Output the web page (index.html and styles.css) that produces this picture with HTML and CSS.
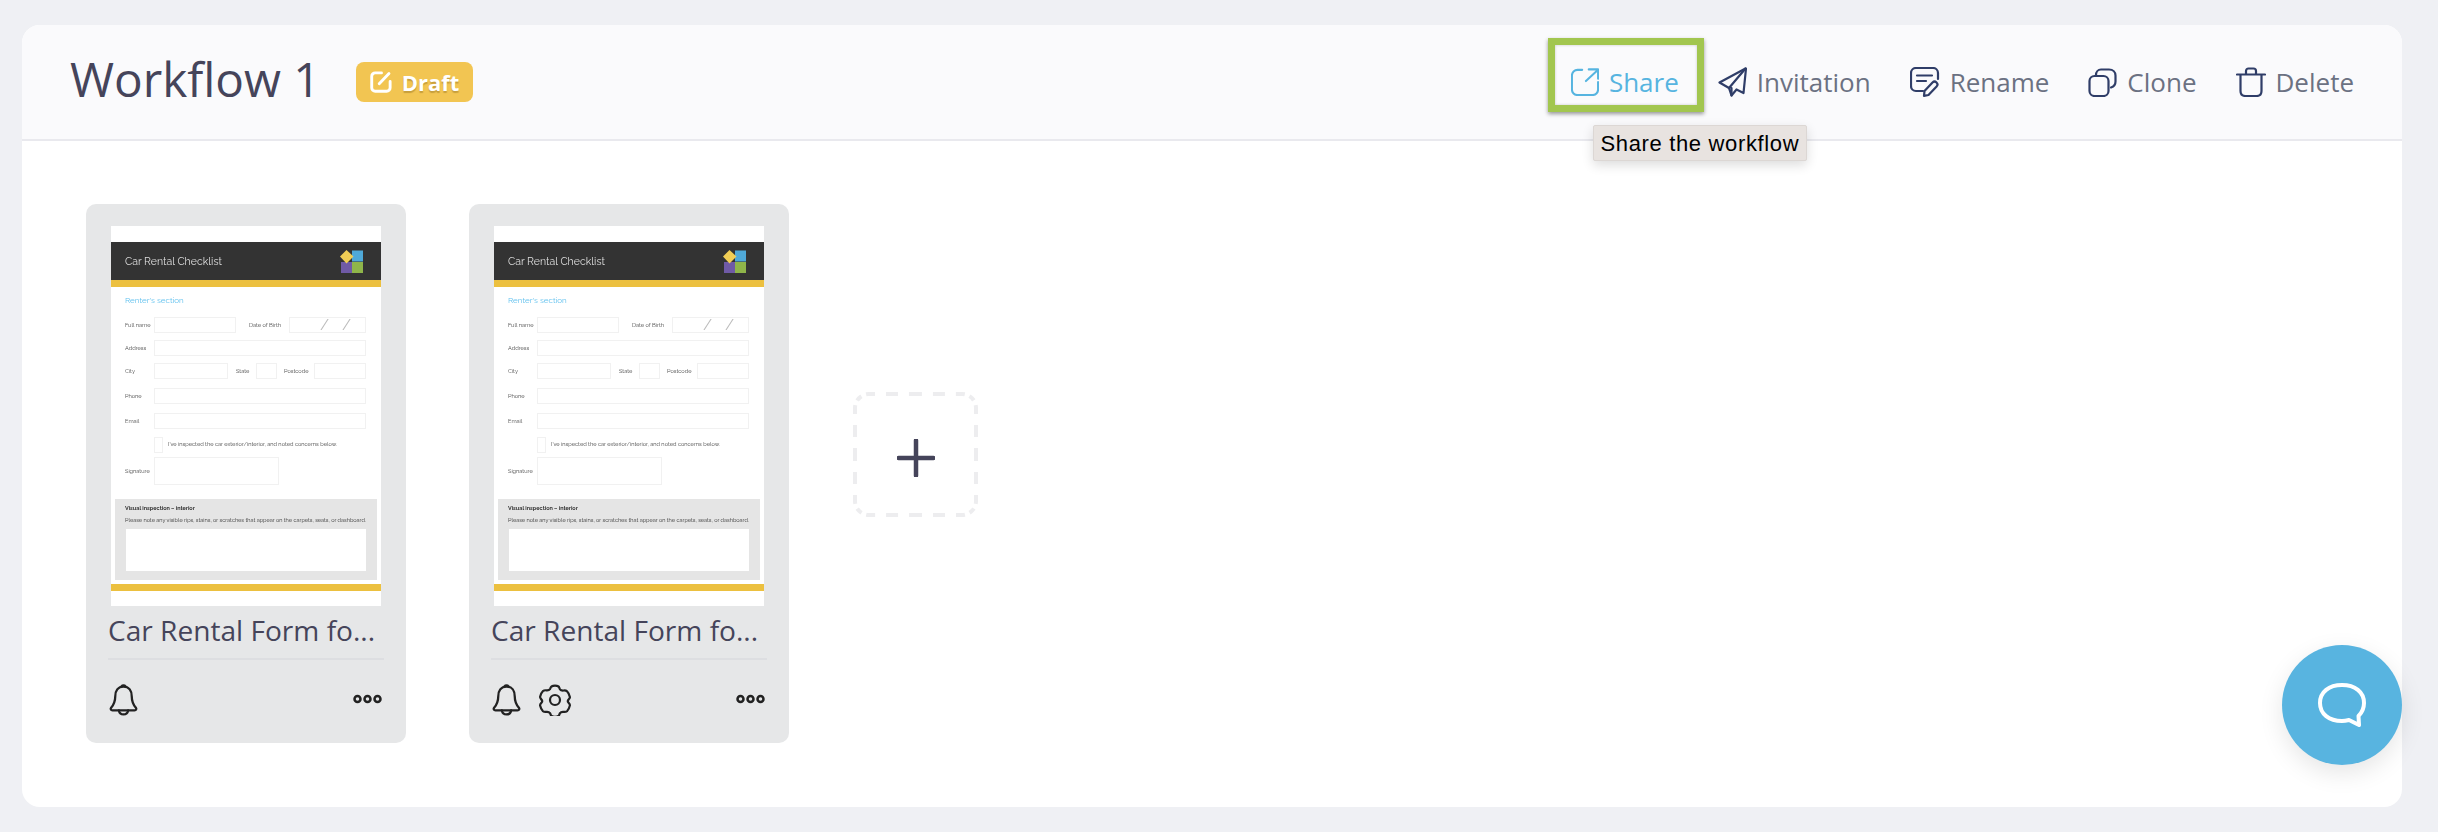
FILE: index.html
```html
<!DOCTYPE html>
<html lang="en">
<head>
<meta charset="utf-8">
<title>Workflow 1</title>
<link rel="stylesheet" href="styles.css">
</head>
<body>
<svg class="defs" aria-hidden="true">
  <symbol id="bell" viewBox="0 0 28 31"><path d="M14 2.500C8.500 2.500 6 7 6 12c0 5-1.500 8-4 11-.9 1.200-.2 2.500 1.300 2.500h21.400c1.500 0 2.200-1.300 1.300-2.500-2.500-3-4-6-4-11 0-5-2.500-9.500-8-9.500Z"/><path d="M9.500 25.500c.4 2.700 2.200 4 4.500 4s4.100-1.300 4.500-4"/><path d="M12 2.300c1-1.300 3-1.300 4 0"/></symbol>
  <symbol id="gear" viewBox="0 0 32 32"><path d="M12.500 2.500c1.800-1.300 5.200-1.300 7 0 .8.600.9 1.900 1.500 2.800.7 1 2.300 1.300 3.600 1.200 1.300-.1 2.500-.1 3.400.7 1.400 1.400 2.500 3.900 2.900 5.800.2 1-.8 2-1.500 2.800-.8 1-.8 1.900 0 2.800.7.800 1.700 1.800 1.500 2.800-.4 1.900-1.500 4.400-2.900 5.800-.9.800-2.100.8-3.400.7-1.300-.1-2.900.2-3.600 1.200-.6.900-.7 2.200-1.500 2.800-1.800 1.300-5.200 1.300-7 0-.8-.6-.9-1.900-1.500-2.800-.7-1-2.300-1.300-3.600-1.200-1.300.1-2.500.1-3.400-.7-1.400-1.400-2.500-3.900-2.900-5.800-.2-1 .8-2 1.500-2.800.8-.9.800-1.800 0-2.800C1.900 14.700.9 13.700 1.100 12.800c.4-1.900 1.500-4.400 2.900-5.800.9-.8 2.100-.8 3.400-.7 1.300.1 2.900-.2 3.600-1.200.6-.9.700-2.200 1.500-2.600Z"/><circle cx="16" cy="16" r="5"/></symbol>
  <symbol id="dots" viewBox="0 0 29 10"><circle cx="4.500" cy="5" r="3"/><circle cx="14.500" cy="5" r="3"/><circle cx="24.500" cy="5" r="3"/></symbol>
  <symbol id="logo" viewBox="0 0 23 23"><rect x="12" y="0.500" width="11" height="11" fill="#4fa9d8"/><rect x="12" y="12" width="11" height="11" fill="#8fb54a"/><rect x="1" y="12" width="11" height="11" fill="#6f5aa6"/><path d="M6.500 0 13.500 6.500 6.500 13.500 0 6.500Z" fill="#f0cd55"/></symbol>
</svg>

<main class="panel">
  <header class="topbar">
    <div class="heading">
      <h1 class="title">Workflow 1</h1>
      <span class="badge">
        <svg class="badge-icon" viewBox="0 0 20 20"><path d="M10 2.500H4.500a3 3 0 0 0-3 3v10a3 3 0 0 0 3 3h10a3 3 0 0 0 3-3V10"/><path d="m8 12 8.500-9"/></svg>
        Draft
      </span>
    </div>
    <nav class="actions">
      <a class="action share">
        <svg class="icon" width="28" height="28" viewBox="0 0 30 30"><path d="M12 2H7a6 6 0 0 0-6 6v15a6 6 0 0 0 6 6h16a6 6 0 0 0 6-6v-8"/><path d="M16 14 29 2M19 1.500h10v10"/></svg>
        <span>Share</span>
        <span class="tooltip">Share the workflow</span>
      </a>
      <a class="action">
        <svg class="icon" width="29" height="30" viewBox="0 0 29 30"><path d="M27.500 1.500 1.500 15.500l9.500 5.500 2.500 7.500 5-6 7 3.500 2.500-24.500Z"/><path d="M27.500 1.500 11 21M13.500 28.500l0-7.500"/></svg>
        <span>Invitation</span>
      </a>
      <a class="action">
        <svg class="icon" width="30" height="30" viewBox="0 0 30 30"><path d="M13 24H6a5 5 0 0 1-5-5V6a5 5 0 0 1 5-5h17a5 5 0 0 1 5 5v6"/><path d="M7 8.500h15M7 14h9"/><path d="m14.500 24 8-8.500c1.200-1.200 2.800-1.200 4 0s1.300 2.800.1 4l-8.100 8.500-4.500.8.500-4.800Z"/></svg>
        <span>Rename</span>
      </a>
      <a class="action">
        <svg class="icon" width="29" height="29" viewBox="0 0 29 29"><rect x="1.500" y="8" width="19" height="20" rx="5"/><path d="M8 8V7c0-3 2-5.500 5-5.500h8c4 0 6.500 2.500 6.500 6v6c0 3-1.500 5-4.500 6"/></svg>
        <span>Clone</span>
      </a>
      <a class="action">
        <svg class="icon" width="30" height="30" viewBox="0 0 30 30"><path d="M1 7.500h28"/><path d="M10 7V4c0-1.500 1-2.500 2.500-2.500h5C19 1.500 20 2.500 20 4v3"/><path d="M4.500 8v16c0 3 2 5 5 5h11c3 0 5-2 5-5V8"/></svg>
        <span>Delete</span>
      </a>
    </nav>
  </header>

  <section class="board">
    <article class="card">
      <div class="thumb">
        <div class="thumb-head"><span>Car Rental Checklist</span><svg class="thumb-logo"><use href="#logo"/></svg></div>
        <div class="thumb-rule"></div>
        <p class="thumb-section">Renter's section</p>
        <div class="frow r1"><span class="lab">Full name</span><i class="fld w82"></i><span class="lab mid">Date of Birth</span><i class="fld grow date"><b>/</b><b>/</b></i></div>
        <div class="frow r2"><span class="lab">Address</span><i class="fld grow"></i></div>
        <div class="frow r3"><span class="lab">City</span><i class="fld w74"></i><span class="lab st">State</span><i class="fld w21"></i><span class="lab pc">Postcode</span><i class="fld grow"></i></div>
        <div class="frow r4"><span class="lab">Phone</span><i class="fld grow"></i></div>
        <div class="frow r5"><span class="lab">Email</span><i class="fld grow"></i></div>
        <div class="frow r6"><span class="lab"></span><i class="fld w9"></i><span class="lab chk">I've inspected the car exterior/interior, and noted concerns below.</span></div>
        <div class="frow r7"><span class="lab">Signature</span><i class="fld w125"></i></div>
        <div class="inspect">
          <strong>Visual inspection – interior</strong>
          <span>Please note any visible rips, stains, or scratches that appear on the carpets, seats, or dashboard.</span>
          <i></i>
        </div>
        <div class="thumb-foot"></div>
      </div>
      <h2 class="card-title">Car Rental Form fo...</h2>
      <div class="card-tools">
        <svg class="tool bell"><use href="#bell"/></svg>
        <svg class="tool dots"><use href="#dots"/></svg>
      </div>
    </article>

    <article class="card">
      <div class="thumb">
        <div class="thumb-head"><span>Car Rental Checklist</span><svg class="thumb-logo"><use href="#logo"/></svg></div>
        <div class="thumb-rule"></div>
        <p class="thumb-section">Renter's section</p>
        <div class="frow r1"><span class="lab">Full name</span><i class="fld w82"></i><span class="lab mid">Date of Birth</span><i class="fld grow date"><b>/</b><b>/</b></i></div>
        <div class="frow r2"><span class="lab">Address</span><i class="fld grow"></i></div>
        <div class="frow r3"><span class="lab">City</span><i class="fld w74"></i><span class="lab st">State</span><i class="fld w21"></i><span class="lab pc">Postcode</span><i class="fld grow"></i></div>
        <div class="frow r4"><span class="lab">Phone</span><i class="fld grow"></i></div>
        <div class="frow r5"><span class="lab">Email</span><i class="fld grow"></i></div>
        <div class="frow r6"><span class="lab"></span><i class="fld w9"></i><span class="lab chk">I've inspected the car exterior/interior, and noted concerns below.</span></div>
        <div class="frow r7"><span class="lab">Signature</span><i class="fld w125"></i></div>
        <div class="inspect">
          <strong>Visual inspection – interior</strong>
          <span>Please note any visible rips, stains, or scratches that appear on the carpets, seats, or dashboard.</span>
          <i></i>
        </div>
        <div class="thumb-foot"></div>
      </div>
      <h2 class="card-title">Car Rental Form fo...</h2>
      <div class="card-tools">
        <svg class="tool bell"><use href="#bell"/></svg>
        <svg class="tool gear"><use href="#gear"/></svg>
        <svg class="tool dots"><use href="#dots"/></svg>
      </div>
    </article>

    <button class="add" aria-label="Add">
      <svg class="add-frame" viewBox="0 0 125 125"><rect x="2" y="2" width="121" height="121" rx="14" pathLength="460" stroke-dasharray="9 11 12 11 13 11 12 11 9 5 6 5" stroke-dashoffset="3"/></svg>
      <svg class="add-plus" viewBox="0 0 38 38"><path d="M19 1.500v35M1.500 19h35"/></svg>
    </button>
  </section>

  <button class="chat" aria-label="Chat">
    <svg viewBox="0 0 48 44"><path d="M24 2C11 2 2 9 2 20s9 18 22 18c3 0 5-.5 7-1l10 5-.5-9c3-3 5.500-8 5.500-13C46 9 37 2 24 2Z"/></svg>
  </button>
</main>
</body>
</html>
```
FILE: styles.css
```css
* { box-sizing: border-box; }
html, body { margin: 0; height: 832px; overflow: hidden; }
body {
  background: #eff0f4;
  padding: 25px 36px 25px 22px;
  font-family: "Open Sans", "Noto Sans", sans-serif;
}
.defs { position: absolute; width: 0; height: 0; }

.panel {
  position: relative;
  height: 782px;
  background: #fff;
  border-radius: 18px;
  display: flex;
  flex-direction: column;
}

.topbar {
  height: 116px;
  flex: none;
  background: #fafafc;
  border-bottom: 2px solid #e9e9ee;
  border-radius: 18px 18px 0 0;
  display: flex;
  align-items: center;
  justify-content: space-between;
  padding: 0 48px 5px 48px;
}
.heading { display: flex; align-items: center; gap: 35px; }
.title {
  margin: -2px 0 0;
  font-size: 47.700px;
  font-weight: 400;
  line-height: 1;
  color: #45445a;
}
.badge {
  display: flex;
  align-items: center;
  gap: 9px;
  height: 40px;
  padding: 0 14px;
  margin-top: 5px;
  background: #f2c552;
  border-radius: 8px;
  color: #fff;
  font-size: 22px;
  font-weight: 700;
  text-shadow: 0 2px 1px rgba(120, 90, 20, .35);
}
.badge-icon {
  width: 23px;
  height: 23px;
  fill: none;
  stroke: #fff;
  stroke-width: 2.500;
  stroke-linecap: round;
}

.actions { display: flex; align-items: center; gap: 39px; margin-top: 5px; }
.action {
  position: relative;
  display: flex;
  align-items: center;
  gap: 10px;
  font-size: 26px;
  line-height: 32px;
  color: #6b7182;
}
.icon {
  flex: none;
  fill: none;
  stroke: #2f3d68;
  stroke-width: 2.200;
  stroke-linecap: round;
  stroke-linejoin: round;
}
.share { color: #56b4e0; }
.share .icon { stroke: #56b4e0; }
.share::after {
  content: "";
  position: absolute;
  left: -23px;
  right: -25px;
  top: -28px;
  bottom: -14px;
  border: 7px solid #a2c64f;
  box-shadow: 0 2px 4px rgba(0, 0, 0, .4), inset 0 0 3px rgba(0, 0, 0, .2);
}
.tooltip {
  position: absolute;
  left: 22px;
  top: 59px;
  width: 214px;
  height: 36px;
  background: #e8e3e0;
  border: 1px solid #dcd7d4;
  border-radius: 2px;
  box-shadow: 0 4px 12px rgba(0, 0, 0, .14);
  font-family: "Liberation Sans", Arial, sans-serif;
  font-size: 22px;
  line-height: 36px;
  letter-spacing: .65px;
  text-align: center;
  color: #000;
  white-space: nowrap;
  z-index: 2;
}

.board {
  flex: 1;
  display: flex;
  align-items: flex-start;
  gap: 63px;
  padding: 63px 64px;
}
.card {
  width: 320px;
  height: 539px;
  flex: none;
  padding: 22px 22px 0;
  background: #e6e7e8;
  border-radius: 10px;
}

.thumb {
  margin: 0 3px;
  width: 270px;
  height: 380px;
  padding-top: 16px;
  background: #fff;
  overflow: hidden;
  font-family: "Raleway", "Lato", sans-serif;
  filter: blur(.3px);
}
.thumb-head {
  height: 38px;
  background: #333;
  color: #dedede;
  font-size: 10.500px;
  display: flex;
  align-items: center;
  justify-content: space-between;
  padding: 0 18px 0 14px;
}
.thumb-logo { width: 23px; height: 23px; }
.thumb-rule { height: 7px; background: #ecc03f; }
.thumb-section {
  margin: 5px 0 9px 14px;
  height: 16px;
  line-height: 16px;
  font-size: 8px;
  color: #5fc0ee;
}
.frow {
  display: flex;
  align-items: center;
  height: 16px;
  padding: 0 15px 0 14px;
  font-size: 5.600px;
  color: #444;
}
.r2, .r3 { margin-top: 7px; }
.r4 { margin-top: 8.500px; }
.r5 { margin-top: 9px; }
.r6 { margin-top: 8.500px; }
.r7 { margin-top: 4px; height: 28px; }
.lab { flex: none; width: 29px; white-space: nowrap; }
.mid { width: 31px; margin: 0 9px 0 13px; }
.st { width: 20px; margin-left: 8px; }
.pc { width: 29.500px; margin-left: 7px; }
.chk { width: auto; margin: -2px 0 0 5px; }
.fld { display: block; flex: none; height: 100%; background: #fff; border: 1px solid #f1f1f1; }
.fld.grow { flex: 1; }
.w82 { width: 82px; }
.w74 { width: 74px; }
.w21 { width: 21px; }
.w9 { width: 9px; }
.w125 { width: 125px; }
.date { display: flex; justify-content: flex-end; gap: 13px; padding-right: 14px; font-style: normal; }
.date b { font-weight: 400; font-size: 15px; line-height: 14px; color: #bbb; }
.inspect {
  display: flex;
  flex-direction: column;
  height: 81px;
  margin: 14px 4px 0;
  padding: 6px 10px 9px;
  background: #e5e5e5;
  font-size: 5.500px;
  color: #333;
}
.inspect strong { line-height: 7px; font-weight: 700; }
.inspect span { margin-top: 5px; line-height: 7px; white-space: nowrap; }
.inspect i { flex: 1; display: block; margin: 5px 1px 0; background: #fff; }
.thumb-foot { height: 7px; margin-top: 4px; background: #ecc03f; }

.card-title {
  margin: 7px 0 0;
  height: 47px;
  font-size: 28.100px;
  font-weight: 400;
  line-height: 34px;
  color: #45445a;
  white-space: nowrap;
  border-bottom: 2px solid #dddee1;
}
.card-tools { display: flex; align-items: center; gap: 18px; padding: 24px 2px 0 1px; }
.tool { flex: none; fill: none; stroke: #222; stroke-width: 2.200; stroke-linecap: round; stroke-linejoin: round; }
.bell { width: 29px; height: 32px; }
.gear { width: 32px; height: 32px; }
.dots { width: 29px; height: 10px; margin-left: auto; margin-top: -2px; stroke-width: 2.500; }

.add {
  position: relative;
  width: 125px;
  height: 125px;
  flex: none;
  margin: 188px 0 0 1px;
  padding: 7px 0 0;
  border: 0;
  background: none;
  display: flex;
  align-items: center;
  justify-content: center;
}
.add-frame { position: absolute; inset: 0; fill: none; stroke: #ededef; stroke-width: 4; }
.add-plus { width: 38px; height: 38px; fill: none; stroke: #45445a; stroke-width: 4.500; stroke-linecap: round; }

.chat {
  position: absolute;
  right: 0;
  bottom: 42px;
  width: 120px;
  height: 120px;
  padding: 0;
  border: 0;
  border-radius: 50%;
  background: #58b4e0;
  box-shadow: 0 8px 24px rgba(0, 0, 0, .1);
  display: flex;
  align-items: center;
  justify-content: center;
}
.chat svg { width: 48px; height: 44px; fill: none; stroke: #fff; stroke-width: 4; stroke-linejoin: round; }
```
